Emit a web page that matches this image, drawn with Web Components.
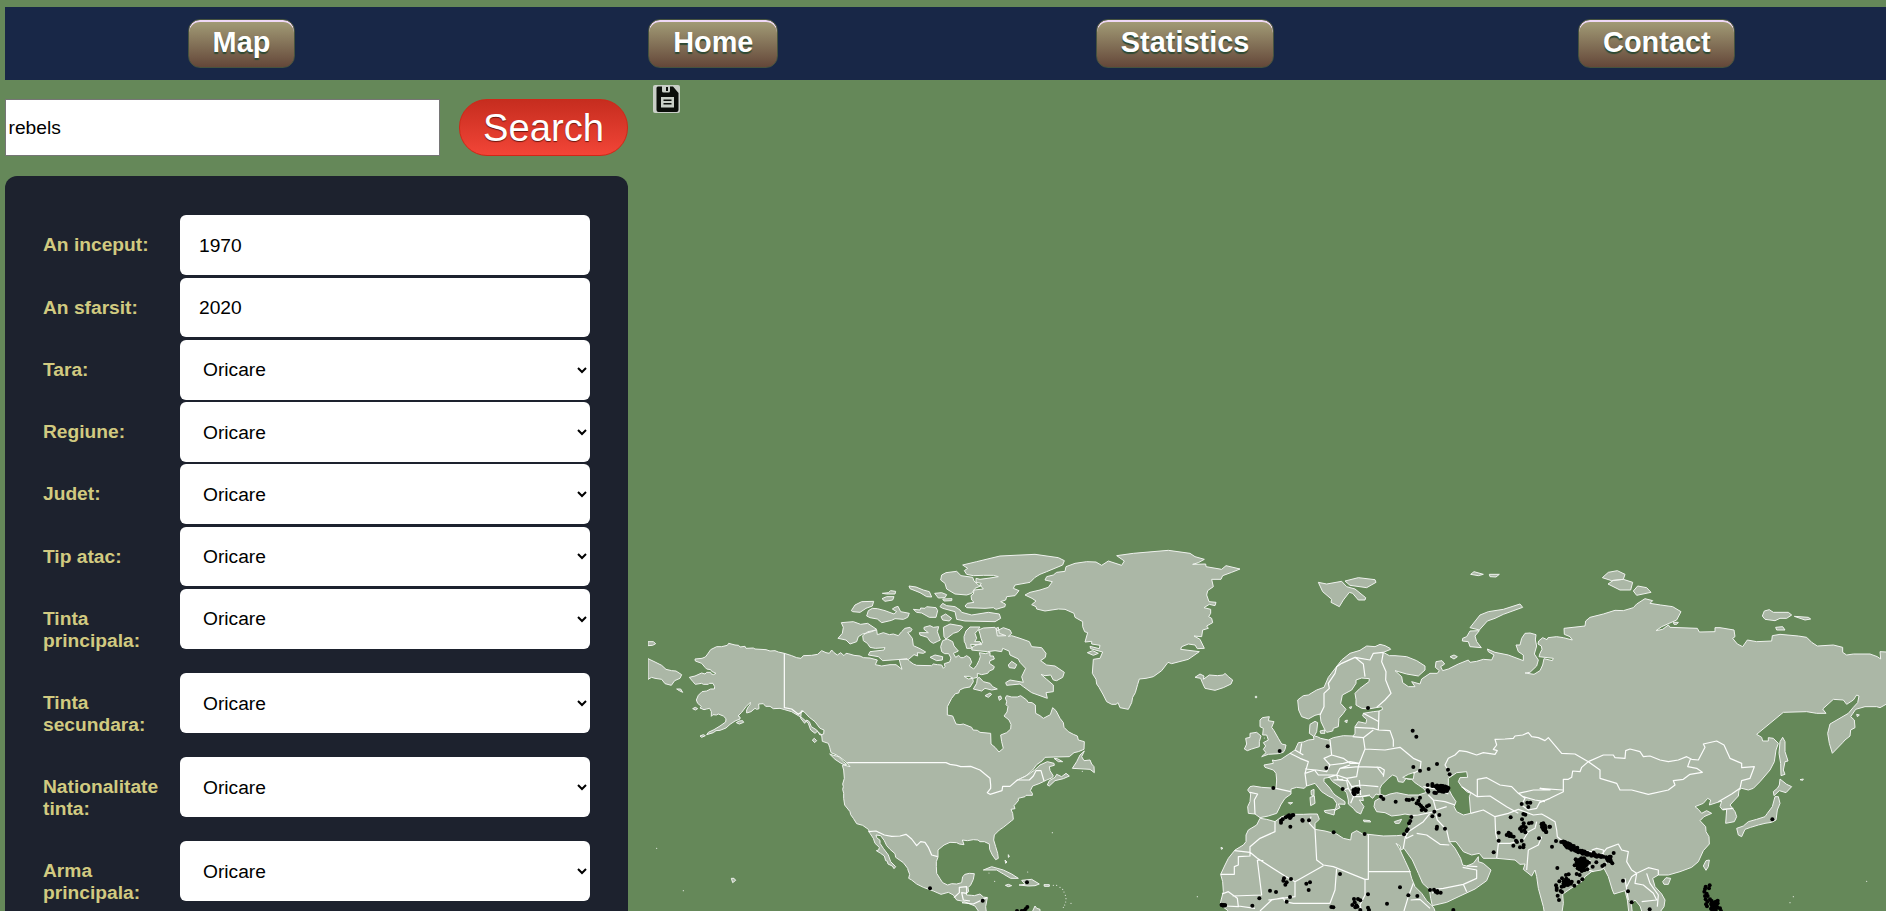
<!DOCTYPE html>
<html lang="ro">
<head>
<meta charset="utf-8">
<title>Map</title>
<style>
html,body{margin:0;height:100%;overflow:hidden;background:#658859;font-family:"Liberation Sans",Arial,sans-serif}
</style>
</head>
<body>
<map-page>
  <site-nav slot="nav"><nav-button>Map</nav-button><nav-button>Home</nav-button><nav-button>Statistics</nav-button><nav-button>Contact</nav-button></site-nav>
  <search-bar slot="side"></search-bar>
  <filter-panel slot="side">
    <filter-field kind="text" value="1970">An inceput:</filter-field>
    <filter-field kind="text" value="2020">An sfarsit:</filter-field>
    <filter-field>Tara:</filter-field>
    <filter-field>Regiune:</filter-field>
    <filter-field>Judet:</filter-field>
    <filter-field>Tip atac:</filter-field>
    <filter-field tall>Tinta principala:</filter-field>
    <filter-field tall>Tinta secundara:</filter-field>
    <filter-field tall>Nationalitate tinta:</filter-field>
    <filter-field tall>Arma principala:</filter-field>
  </filter-panel>
  <world-map slot="map"></world-map>
</map-page>
<script>
function define(name, html, setup){
  customElements.define(name, class extends HTMLElement{
    constructor(){ super(); this.attachShadow({mode:'open'}).innerHTML = html; }
    connectedCallback(){ if(setup) setup(this, this.shadowRoot); }
  });
}

define('map-page', `<style>
:host{display:grid;grid-template-columns:623px 1238px;grid-template-rows:73px 831px;column-gap:20px;padding:7px 0 0 5px;width:1881px;height:904px;overflow:hidden}
.nav{grid-column:1/3}
.side{padding-top:19px;display:flex;flex-direction:column;gap:19.5px}
</style><div class="nav"><slot name="nav"></slot></div><div class="side"><slot name="side"></slot></div><slot name="map"></slot>`);

define('site-nav', `<style>
:host{display:grid;grid-template-columns:repeat(4,471.8px);justify-items:center;align-items:center;height:73px;padding-left:.6px;background:#182747;overflow:hidden}
</style><slot></slot>`);

define('nav-button', `<style>
:host{display:block}
button{display:block;box-sizing:border-box;height:49px;padding:0 23.7px 3px;border:1px solid #45523f;border-radius:12px;background:linear-gradient(#a49e78,#644739);box-shadow:inset 0 2px 0 #efd8f6;color:#fff;font:bold 28.9px/44px "Liberation Sans",Arial,sans-serif;text-shadow:0 2px 1px #2f4a33}
</style><button><slot></slot></button>`);

define('search-bar', `<style>
:host{display:flex;justify-content:space-between;height:57.5px;align-items:flex-start}
input{box-sizing:border-box;width:435px;height:56.5px;border:1px solid #767676;padding:2px 2.5px 0;margin:0;font:19.2px "Liberation Sans",Arial,sans-serif;color:#000;background:#fff;outline:0}
button{box-sizing:border-box;width:169px;height:57px;padding:0;border:1px solid #d02718;border-radius:28px;background:linear-gradient(#c62d1f,#f24537);color:#fff;font:38.2px/54px "Liberation Sans",Arial,sans-serif;text-shadow:0 1px 1px #6b160e}
</style><input type="text" value="rebels"><button>Search</button>`);

define('filter-panel', `<style>
:host{display:block;flex:1;box-sizing:border-box;background:#1d222e;border-radius:12px 12px 0 0;padding:39.8px 38px 0}
</style><slot></slot>`);

define('filter-field', `<style>
:host{display:grid;grid-template-columns:137px 410px;height:62.3px}
:host([tall]){height:84.1px}
label{padding-top:19px;width:118px;color:#d1ca80;font:bold 19.2px/22px "Liberation Sans",Arial,sans-serif}
input,select{box-sizing:border-box;width:410px;height:59.7px;margin:0;border:0;border-radius:6px;background:#fff;color:#000;font:19.2px "Liberation Sans",Arial,sans-serif;padding:0 19px;outline:0}
input{padding-top:1px}
</style><label><slot></slot></label>`, (el, root)=>{
  const c = document.createElement(el.getAttribute('kind')==='text' ? 'input' : 'select');
  if(c.tagName==='INPUT') c.value = el.getAttribute('value');
  else c.add(new Option('Oricare'));
  root.append(c);
});

/* Polygons and lines use a grid of 3 units per pixel; "@n" sets the x origin for the points after it. */
const LAND = [
`@0 433,340 415,336 405,332 390,333 378,329 345,327 340,324 318,325 315,319 300,321 296,316 285,315 266,310 262,316 245,320 230,320 212,329 203,342 196,351 186,355 165,357 166,363 185,370 195,382 200,387 212,389 215,394 228,400 220,404 213,401 212,397 200,397 195,402 185,399 165,408 148,412 158,424 166,433 185,430 190,433 205,433 208,430 219,430 224,440 223,447 212,447 200,453 186,455 175,466 169,480 173,490 184,499 180,504 192,509 200,507 209,505 214,515 214,529 219,524 229,525 235,522 250,528 258,536 257,546 240,558 222,569 205,577 200,584 220,578 228,572 240,571 258,564 270,553 285,543 300,537 300,531 294,528 305,517 318,500 331,487 330,495 325,500 320,510 320,519 333,515 345,505 350,508 357,506 356,492 370,491 377,499 390,499 400,506 420,505 434,509 455,515 475,527 488,535 505,550 512,570 525,580 532,574 545,585 547,604 565,610 569,622 573,638 590,645 610,665 620,673 607,676 611,690 613,715 608,732 610,740 608,748 611,760 611,775 614,795 630,815 632,824 640,835 650,851 668,856 685,868 690,880 700,895 705,910 718,922 716,930 709,932 722,940 733,948 737,962 742,964 744,972 757,978 762,986 767,980 752,965 745,945 730,925 720,910 720,901 710,893 708,885 722,887 733,902 740,917 750,928 765,941 767,952 790,968 803,985 804,990 809,1003 806,1015 815,1020 830,1032 850,1042 880,1053 903,1063 925,1057 940,1065 950,1080 970,1084 990,1092 @900 105,1098 115,1113 115,1125 140,1125 137,1100 142,1073 130,1071 120,1062 103,1067 95,1066 80,1065 78,1060 86,1055 84,1043 92,1035 100,1018 103,1001 88,1000 75,1003 68,1010 65,1028 50,1032 35,1031 23,1035 8,1028 0,1016 -10,1000 -11,980 -11,965 -6,951 -6,930 12,915 30,907 50,908 58,912 72,914 67,900 82,902 100,899 114,900 120,905 133,905 148,912 149,928 157,945 167,959 175,955 173,940 167,920 161,900 163,885 178,870 190,862 215,842 220,838 218,820 213,808 225,806 222,797 235,782 235,775 255,770 258,766 277,766 277,760 271,752 278,738 297,731 310,725 320,720 335,714 340,708 330,692 328,680 343,676 342,670 322,665 300,675 284,690 265,704 232,720 256,709 278,690 290,674 307,662 315,652 345,651 388,650 402,638 415,635 432,628 433,605 415,600 412,588 400,583 385,575 372,562 370,548 360,535 348,512 338,503 331,524 310,535 300,527 287,520 286,495 276,488 264,487 260,480 242,467 232,471 215,471 200,467 196,474 200,484 198,494 204,500 201,516 192,528 207,540 213,553 212,567 200,578 182,585 185,605 190,625 177,636 165,622 153,612 152,580 120,577 112,571 99,570 95,562 70,552 60,554 48,552 38,528 22,525 22,500 35,475 46,461 56,459 59,450 72,444 90,441 100,425 98,415 85,417 72,409 88,409 100,415 112,412 112,400 125,404 143,400 148,393 160,388 163,380 148,370 150,362 163,357 160,348 150,348 150,337 136,341 118,338 121,350 117,362 110,376 101,387 88,378 95,367 90,354 80,347 70,353 62,353 56,346 47,352 40,340 55,333 42,318 38,305 22,297 8,302 2,320 5,335 14,341 26,341 33,354 29,366 13,371 15,380 10,385 5,375 -8,374 -20,372 -25,377 -70,376 -80,372 -90,365 -99,356 -122,359 -118,375 -114,388 -132,374 -150,374 -175,378 -194,374 -188,360 -210,354 -230,353 -240,348 -258,346 -275,341 @0 618,340 612,347 602,338 592,345 582,338 575,330 568,340 558,338 545,332 533,343 515,346 490,347 483,355 470,353 455,347`,
`@0 24,356 45,366 65,376 78,388 95,392 108,393 125,404 120,415 104,422 94,436 75,431 65,418 45,415 35,412 24,418`,
`@0 24,305 40,305 47,311 38,316 24,317`,
`@0 110,447 122,447 128,457 118,452`,`@0 158,506 166,502 173,506 166,510`,`@0 289,548 297,543 308,542 311,547 298,552`,`@0 180,588 190,584 196,587 185,592`,`@0 274,1015 282,1015 287,1021 278,1028`,
`@0 517,600 523,595 530,602 524,608`,`@0 569,642 580,646 598,650 617,665 630,680 615,676 600,668 585,658`,`@0 484,512 493,516 508,532 525,545 540,565 552,570 551,582 540,585 530,570 514,560 508,545 500,540 494,550 482,535`,
`@0 604,248 640,245 662,253 683,250 710,268 695,275 668,282 655,290 650,305 630,312 618,300 594,295 607,280 610,262`,
`@0 634,212 645,195 665,185 701,184 697,198 678,205 660,217 638,215`,
`@0 680,228 685,212 697,205 712,206 735,212 762,222 770,215 757,207 765,202 774,199 782,215 808,220 803,232 790,238 765,236 755,241 725,248 712,237 690,233`,
`@0 727,160 745,158 752,152 767,154 765,162 740,162`,`@0 726,176 740,170 762,170 758,180 735,184`,
`@0 807,138 828,141 850,150 868,155 875,171 860,170 840,158 810,146`,
`@0 668,287 684,275 710,270 712,284 730,278 748,284 760,282 775,287 785,275 795,265 810,262 816,268 812,275 803,277 817,295 820,317 840,326 857,336 850,340 832,338 833,348 822,344 806,358 782,358 728,362 715,350 685,345 690,335 732,330 735,323 706,325 690,322 682,310 670,302`,
`@0 852,262 870,257 880,262 896,260 892,275 901,300 893,304 880,310 870,304 862,292 840,285 838,278 865,278 852,268`,
`@0 820,208 840,210 842,204 855,205 860,200 888,203 893,212 888,232 868,232 845,219 830,217`,
`@0 884,160 905,158 920,164 915,173 895,174`,`@0 903,230 917,222 935,235 928,243 908,240`,`@0 908,177 936,176 935,182 912,183`,`@0 870,352 885,345 908,350 907,360 890,362`,
`@900 10,262 30,252 65,258 68,262 55,275 40,280 18,297 12,290`,
`@900 80,203 75,198 82,190 102,187 95,180 93,167 100,162 102,150 130,147 120,135 124,130 108,127 108,115 120,118 150,114 175,110 160,106 130,106 100,107 80,103 73,92 83,85 68,75 110,65 180,48 285,43 355,53 373,62 368,75 320,95 300,103 285,112 270,127 225,135 220,145 237,152 225,167 200,170 197,180 182,185 196,192 195,200 168,208 160,203 135,205`,
`@900 5,105 18,98 50,94 63,107 98,112 102,123 115,135 124,137 105,145 95,160 80,165 45,162 20,147 15,130 2,120`,
`@900 0,200 8,190 20,197 45,200 60,210 65,217 95,225 145,217 178,222 182,235 165,245 75,243 50,238 45,215 8,205`,
`@900 72,290 78,273 90,261 120,261 113,271 105,280 110,295 104,305 120,305 125,314 92,313 95,325 80,325 77,312 73,305`,
`@900 116,270 130,264 165,262 172,272 190,263 210,270 215,280 205,289 215,287 240,295 268,305 275,320 305,323 318,340 316,352 302,362 320,375 345,378 373,397 368,412 350,422 340,420 332,405 315,407 303,403 320,418 340,435 340,455 318,458 322,475 275,458 250,440 240,432 200,436 197,428 210,420 250,427 245,410 257,385 240,367 235,357 210,345 207,333 188,325 185,335 165,332 142,335 95,330 98,320 128,308 123,295 120,282`,
`@900 168,265 175,262 178,280 198,287 172,288`,`@900 205,375 215,364 230,374 225,385 208,383`,`@900 118,412 130,425 150,430 158,440 172,447 155,450 135,445 125,453 100,447 110,430 112,415`,`@900 135,467 150,459 155,463 145,472`,`@900 175,470 182,468 185,476 178,481`,
`@900 530,47 580,40 685,31 750,40 765,50 793,58 775,68 758,73 797,72 798,80 845,88 858,77 900,87 875,97 848,107 843,118 815,118 820,140 803,152 800,165 807,185 828,187 825,197 808,193 792,203 812,208 812,220 806,230 815,235 818,248 800,258 805,265 788,270 785,290 762,288 780,298 793,325 772,326 765,315 745,312 725,320 722,328 778,335 745,358 695,371 684,367 665,392 640,410 618,415 598,417 593,433 586,458 578,472 575,488 565,508 540,503 534,488 528,493 515,493 500,485 490,465 477,442 470,432 468,418 457,400 460,358 480,355 488,336 452,326 450,319 478,326 480,316 455,312 455,304 435,306 443,278 434,275 428,260 428,245 405,232 402,220 375,208 355,207 315,213 290,207 288,200 275,194 288,183 276,175 255,165 270,157 300,150 325,142 337,125 315,120 320,110 340,105 350,97 375,94 378,80 405,70 440,65 468,66 485,76 505,63 545,76 553,63`,
`@900 442,338 458,332 475,340 460,346`,
`@900 765,412 780,402 792,408 790,418 808,405 832,407 850,405 855,400 865,410 878,420 873,432 850,443 825,451 795,445 788,430 782,415`,
`@900 433,633 425,650 432,662 450,660 455,672 462,680 463,698 450,688 397,685 410,665 420,645`,`@900 322,735 328,722 345,712 350,703 365,710 378,700 388,708 370,716 345,722 328,738`,`@900 342,655 352,656 368,665 355,665`,
`@900 130,990 155,980 190,990 215,1002 235,1015 212,1015 190,1002 170,990`,`@900 237,1035 255,1033 245,1021 275,1018 298,1032 285,1037 265,1038`,`@900 196,1036 205,1033 215,1037 205,1040`,`@900 312,1034 328,1034 328,1039 313,1039`,`@900 205,944 208,950 205,952`,`@900 195,960 201,966 197,970`,`@900 278,1113 285,1098 290,1105 300,1108 300,1120 278,1120`,
`@900 946,469 950,469 950,473 946,473`,`@900 843,922 849,925 844,928`,
/* Eurasia and Africa */
`@1680 570,325 555,317 540,313 525,320 500,318 480,331 450,340 425,360 408,382 385,412 372,442 350,450 325,465 310,467 293,480 296,510 305,530 325,537 345,526 360,522 363,545 375,570 380,577 398,573 400,565 415,560 417,535 430,520 438,508 422,490 427,465 455,450 468,430 468,420 485,414 508,416 507,425 480,445 465,460 468,478 468,495 485,505 505,507 545,500 548,508 537,513 520,515 490,520 488,528 500,538 498,550 475,545 465,560 465,580 460,588 430,587 400,593 385,600 362,595 352,590 343,588 350,575 353,548 345,544 330,553 328,580 340,588 342,598 325,600 310,606 295,608 285,630 270,640 255,650 243,658 225,662 217,660 220,670 192,675 195,682 220,690 228,700 230,720 228,745 185,742 160,738 150,740 143,750 152,762 150,785 143,800 145,820 165,822 180,833 205,828 230,820 240,800 242,795 255,775 273,762 273,747 290,742 312,745 320,738 345,730 365,755 385,768 400,775 410,790 408,802 403,812 420,803 415,792 435,793 435,785 405,765 398,757 390,745 372,725 372,715 388,712 398,725 420,740 440,758 445,780 445,792 460,805 468,815 482,822 488,808 492,800 478,780 490,782 488,770 508,767 518,775 528,762 540,765 547,770 525,783 522,800 530,815 555,818 575,828 600,825 615,822 632,825 630,850 622,870 612,885 590,887 550,888 505,883 488,882 470,872 455,880 452,900 430,895 410,882 375,873 345,868 345,850 358,838 352,822 330,822 310,823 270,823 245,830 225,845 200,838 180,835 170,855 145,870 138,885 138,905 130,915 105,930 85,955 75,975 62,1003 68,1025 70,1055 62,1085 62,1095 85,1113 95,1130 710,1130 702,1105 695,1096 680,1082 665,1060 645,1040 635,1015 628,990 615,962 598,925 588,910 600,918 603,930 612,925 637,960 655,1000 668,1030 688,1048 692,1075 697,1097 740,1087 780,1068 825,1047 860,1022 873,990 850,970 835,965 835,950 820,970 800,978 788,975 782,955 765,925 748,905 768,905 790,935 815,945 838,940 850,955 890,955 945,960 960,973 975,972 970,988 995,1008 1005,990 1010,1010 1015,1045 1030,1100 1035,1130 @2700 64,1130 70,1090 68,1063 90,1047 125,1025 135,1010 155,995 183,990 192,985 205,1010 217,1050 222,1062 255,1052 262,1080 268,1130 278,1130 274,1090 285,1080 300,1098 305,1113 315,1130 350,1130 372,1100 375,1080 365,1062 345,1040 338,1015 355,1005 385,1005 420,995 455,982 475,965 490,932 508,912 507,890 498,875 497,860 480,842 492,830 515,820 500,812 485,820 475,808 465,800 490,790 503,775 512,780 508,795 545,783 540,800 548,810 560,808 557,850 583,845 590,830 585,815 570,795 595,768 597,750 605,745 625,750 640,745 660,725 690,690 703,665 708,630 715,610 700,595 685,593 685,603 668,603 665,592 650,583 690,550 730,517 800,515 830,520 858,520 848,507 880,478 910,480 920,493 940,480 950,465 957,468 953,488 940,502 925,520 870,552 863,580 868,610 877,640 908,608 915,600 930,588 932,570 945,563 943,540 932,530 947,508 975,500 1010,500 1020,503 1038,493 1060,490 1060,337 1020,335 1022,357 1012,350 990,342 940,342 920,345 908,337 908,322 880,315 832,318 815,307 800,292 775,288 720,283 697,287 695,303 650,305 622,300 608,320 592,312 578,295 585,290 582,270 540,263 525,263 525,275 478,276 472,265 390,262 385,255 368,268 348,272 365,260 410,240 423,215 398,200 362,195 330,190 338,182 315,176 290,192 280,203 250,212 225,211 190,222 150,232 137,243 135,258 72,265 73,283 90,290 97,300 70,293 50,290 24,293 21,299 8,293 -4,303 -6,312 4,318 6,328 0,340 -3,350 40,355 37,362 12,356 8,375 0,392 -18,403 -45,399 -30,397 -10,378 -5,360 -17,342 -10,318 -14,300 -12,284 @1680 990,279 975,280 965,295 960,315 948,315 955,335 970,345 970,362 925,345 885,337 862,327 865,335 882,345 875,360 850,358 830,364 810,367 805,360 775,372 745,387 728,392 722,380 734,372 726,362 708,365 706,382 718,392 712,400 690,400 665,417 660,432 635,425 645,440 625,440 608,428 605,410 585,392 620,402 655,408 675,390 675,378 650,362 620,350 585,347 568,347 550,337 572,328`,
`@1680 187,533 208,530 205,542 222,545 215,562 222,572 235,595 245,612 258,615 255,628 250,637 235,641 205,643 185,650 198,638 190,628 197,618 190,608 205,600 200,585 188,585 190,565 180,560 180,540`,
`@1680 133,627 140,612 137,595 150,592 150,580 170,577 183,588 178,605 178,620 155,627 142,632`,
`@1680 355,127 380,132 425,124 440,140 465,147 497,173 495,180 475,180 458,160 448,157 430,180 418,200 393,187 395,178 368,155`,`@1680 435,123 475,113 525,119 528,127 500,143 450,136`,
`@1680 360,573 373,570 375,580 362,580`,`@1680 434,543 442,540 440,549`,`@1680 448,502 455,500 452,507`,`@1680 373,812 405,808 402,825 375,817`,`@1680 330,772 343,768 345,790 332,797`,`@1680 333,752 342,748 342,767 334,765`,`@1680 490,840 510,842 512,846 492,845`,`@1680 583,845 605,838 598,850 586,850`,`@1680 265,788 278,788 270,793`,
`@1680 812,103 822,95 850,103 835,107`,`@1680 868,103 898,103 888,111 870,110`,
`@1680 810,263 840,225 865,215 910,208 960,192 968,202 910,223 885,235 862,243 838,270`,`@1680 810,273 838,272 825,288 830,305 844,323 810,320 805,305 787,303 788,295 800,290`,`@1680 750,350 762,345 772,350 762,357`,
`@2700 187,113 205,97 232,92 255,103 250,118 215,122`,`@2700 204,132 220,121 250,118 278,127 272,150 240,150`,`@2700 280,153 293,138 320,143 333,157 290,166`,`@2700 400,247 415,247 410,253 402,253`,
`@2700 667,228 673,213 688,209 700,217 745,217 755,225 740,235 720,235 705,242 675,238`,`@2700 763,229 805,232 812,237 795,240`,`@2700 707,262 728,260 735,270 710,270`,
`@2700 728,592 735,605 735,635 744,663 735,665 730,690 735,703 723,707 722,670 717,640 720,605`,`@2700 720,717 740,733 755,740 738,758 718,752 702,767 700,755 712,745 718,735`,`@2700 705,770 715,770 720,790 712,810 708,840 695,847 675,850 655,855 632,862 615,868 605,890 595,885 590,865 610,858 625,845 650,838 675,830 682,820 697,800`,`@2700 780,719 790,717 788,721`,`@2700 368,1025 378,1013 392,1015 385,1033 372,1033`,`@2700 490,978 498,962 508,960 505,980 498,991`,`@2700 950,523 958,525 952,530`
];
const SEA = [
`@1680 540,745 545,735 565,715 578,705 590,710 595,725 610,727 618,715 635,718 645,728 655,735 670,745 680,757 655,765 625,765 590,758 570,762 555,768 540,762`,
`@1680 608,712 625,703 643,697 640,717 625,718`,
`@1680 745,715 770,698 800,695 803,712 780,713 775,725 785,740 800,755 812,760 808,770 812,820 790,825 770,815 762,800 768,785 755,765 745,745`
];
const LINES = [
`@0 433,340 433,503 455,507 475,523 490,512`,`@0 622,668 918,668 930,673 950,676 962,680 @900 70,680 92,679 120,690 150,715 152,735 152,745 142,758 150,763 186,752 188,739 210,739 232,720 268,720 280,708 288,692 303,692 312,723`,
`@0 685,875 708,873 733,885 755,889 780,888 798,883 815,897 830,917 842,905 855,907 865,922 875,945 893,950`,
`@900 42,1073 58,1058 58,1042 80,1040 80,1060 65,1058 70,1080 90,1083`,
`@900 66,1088 100,1092 142,1072`,
`@1680 550,337 545,365 558,395 557,420 573,460 555,480 530,502`,`@1680 550,337 520,340 510,360 465,352 425,370 410,380 405,400 385,430 388,445 372,460 372,500 360,525`,`@1680 465,352 490,372 495,410`,
`@1680 537,513 535,570`,`@1680 490,520 537,545`,`@1680 465,562 520,565 535,570 570,572 580,600 580,620`,`@1680 458,590 490,593 520,570`,`@1680 490,593 495,627 555,630 600,622 640,655 663,665 660,690 640,700`,`@1680 495,627 478,670 450,670 430,655 395,645 390,600`,`@1680 395,645 372,655 390,675 380,695 350,690 315,687`,`@1680 390,675 430,670 450,665 478,670 475,680 540,682 553,690 550,710`,`@1680 270,640 300,655 325,665 315,700 320,738`,`@1680 315,700 345,690`,`@1680 345,692 355,705 410,705 420,685 475,680`,`@1680 410,705 440,715 470,710 475,680`,`@1680 385,712 410,705 415,720 440,722 445,745 430,750`,`@1680 440,715 455,740 480,735 535,740`,`@1680 445,745 460,770 480,770 510,765`,`@1680 455,740 460,770 452,790`,`@1680 530,680 550,705`,`@1680 305,610 300,640`,`@1680 285,630 310,645`,`@1680 420,685 450,675`,`@1680 478,720 482,765`,`@1680 400,720 430,718`,`@1680 452,745 470,750 475,765`,
`@1680 228,745 272,755`,`@1680 150,757 173,762 163,780 165,822`,
`@1680 670,740 720,750 745,762`,`@1680 685,765 700,780 735,785 765,795`,`@1680 700,780 708,810 740,800`,`@1680 632,827 655,825 705,815 712,840 740,870 748,905`,`@1680 690,820 670,845 625,875 615,895 610,925`,`@1680 650,880 680,885 720,913 748,915`,`@1680 612,882 620,895 640,885`,
`@1680 225,845 225,875 180,895 150,920 150,937 104,932`,`@1680 150,937 172,955 255,1008`,`@1680 150,920 150,948 115,950 115,975 103,980 103,1003 62,1003`,`@1680 172,960 190,962 M@1680 172,960 185,1065 98,1068`,`@1680 345,868 328,850 333,830`,`@1680 345,868 350,960 370,975 400,980 495,1018 505,1018 505,883`,`@1680 505,995 632,995`,`@1680 370,977 285,1025 255,1008`,`@1680 285,1025 285,1070 205,1080`,`@1680 410,983 405,1050 390,1090 280,1090 255,1085 250,1073 215,1080 180,1113`,`@1680 495,1018 495,1065 480,1095 485,1113`,`@1680 640,1030 625,1070 612,1113`,`@1680 632,1080 660,1078 690,1105`,`@1680 66,1062 85,1055 112,1075 115,1100 75,1098`,`@1680 115,1098 165,1105`,
`@1680 697,1060 705,1048 730,1045 790,1033 800,1055`,`@1680 790,1033 830,1015 830,990 788,982`,`@1680 800,978 832,980`,
`@1680 755,708 735,675 745,655 765,645 778,632 800,635 830,645 850,638 885,643 892,632 880,628 890,615 885,598 915,597 940,595 945,588 968,585 985,578 995,590 1015,593 1035,602 @2700 25,593 65,640 105,642 145,665 190,645 220,645 225,653 255,655 257,632 270,627 300,635 310,650 330,648 360,660 385,665 415,660 440,650 455,658 475,660 495,622 490,612 530,603 552,615 570,655 605,670 605,683 643,680 630,715 605,722 600,745 575,762 535,785`,
`@2700 145,665 180,690 180,715 230,730 240,750 275,750 325,763 385,750 405,735 400,722 430,718 450,703 487,697 470,685 443,680 452,655`,
`@2700 145,665 125,682 120,695 98,693 95,712 85,718 70,718 70,755 30,775 0,787`,`@1680 785,740 832,770 832,718 860,713 900,735 935,740 955,760 1000,750 1050,750 @2700 0,745 68,750`,`@1680 832,770 870,768 920,800 955,820`,`@1680 812,820 850,810 885,830 887,880 895,910 890,955`,`@1680 885,830 925,820 955,808 1000,825 1025,822 @2700 20,830 45,845 50,870 52,890 70,905 110,930 155,935 180,950 200,925 235,912 245,930 265,935 260,965 275,990 290,1000 325,983 355,990 355,1005`,
`@1680 955,760 975,775 965,795 985,810 1010,805 1020,785`,`@1680 970,770 1005,780 1035,785`,`@1680 895,910 930,910 970,900 985,875 1005,865 1010,845`,`@1680 980,990 985,930 1015,915 1025,890`,
`@2700 155,930 170,925 190,930 190,945`,`@2700 150,960 145,990 160,995`,`@2700 190,985 200,965 215,955`,`@2700 290,1000 285,1030 310,1035 340,1060 350,1080 305,1085`,`@2700 260,1040 275,1010 290,1000`,`@2700 255,1015 262,1060 265,1080`,`@2700 320,1000 330,1030 355,1065 352,1100`,`@2700 548,808 580,805`
];
const DOTS = `@0 870,1045 @900 128,1082 261,1027 262,1101 257,1107 252,1112 245,1113 231,1113 845,1094 855,1096 850,1097
@1680 504,504 638,572 649,590 239,633 383,619 379,684 220,744 428,747 640,681 660,692 686,687 711,672 744,689 749,703
460,750 467,747 475,748 460,758 466,755 473,756 463,763 543,770 550,777 587,785 620,779 627,780 638,778 660,773
683,735 697,732 697,738 683,751 685,755 703,758 708,759
655,782 650,790 658,793 663,798 668,803 665,810 671,807 677,811 681,799 687,796 703,815 697,829 718,825 634,831 631,843 627,850 623,868 620,873 612,883 711,860 710,866 735,866
243,848 243,842 248,838 257,832 262,829 267,826 273,830 280,825 270,834 276,826 271,860 307,840 308,842 327,841 401,877 494,882
252,1015 250,1022 260,1027 256,1034 273,1017 210,1052 228,1056 178,1075 157,1097 270,1071 260,1085 319,1031 330,1027 326,1050 420,1002 394,1101 400,1102
462,1077 474,1077 481,1081 464,1087 457,1095 469,1096 472,1100 466,1102 481,1110 504,1063 504,1103 507,1110 561,1091 600,1042 625,1066 652,1068 690,1050 702,1049 707,1055 712,1053 722,1058 712,1058 70,1095 65,1095 75,1096 760,1110
965,792 982,788 991,788 985,801 932,832 970,822 976,824 966,838 971,850 995,848 987,850 960,866 964,862 970,858 977,862 965,873 973,870 976,877 896,878 896,902 881,937 920,885 926,878 932,882 928,888 935,889 941,890 948,902 951,906 965,902 971,915 960,922 970,922 940,917 1017,895
1025,852 1030,855 1026,861 1033,861 1036,866 1030,868 1038,876 1048,860
@2700 5,853 10,850 15,857 8,862 16,864 12,870 19,876 30,860 48,903 36,920 52,984
75,906 85,911 190,950 178,948 166,946 161,938 200,953 212,950 221,939 206,960 217,970 211,964 187,978 193,974 169,967 158,980
110,1002 119,1005 127,1018 116,1026 103,1037 86,1003 78,1005 66,1015 58,1024 48,1036 65,1040 50,1044 50,1050 62,1053 66,1056 53,1067 57,1080
249,1022 264,1054 275,1087 329,1108 697,838
107,958 104,976 113,985 125,993 134,990 142,988 147,968 132,955 124,955 118,962
497,1040 509,1036 507,1045 495,1047 493,1055 500,1061 495,1068 503,1068 497,1078 502,1085 498,1093 501,1099 510,1078 515,1083 520,1090 527,1085 533,1082 533,1090 525,1097 519,1101 513,1106 531,1100 540,1105 543,1113 527,1111 517,1111`;
/* Dense groups: x, y, half-width, half-height, slope, count */
const CLUSTERS = [[2405,742,20,6,.05,26],[2408,751,14,6,0,14],[2790,919,23,8,.45,40],[2829,937,27,5,.3,26],[2875,948,22,4,.1,10],[2825,972,17,16,0,34],[2781,1028,14,11,0,16],[2908,958,9,9,0,5],[3220,1095,12,10,.3,9]];
const SPECKS = `@0 50,925 130,1052 @900 337,878 147,999 164,1024 263,996 340,1036 350,1036 360,1042 368,1048 372,1056 376,1066 378,1076 377,1086 374,1095 370,1102 393,1090 772,1070 427,694 973,594 @2700 750,1088 760,1070 980,1024`;

function points(s){
  let o = 0; const out = [];
  for(const t of s.split(/\s+/)){
    if(t[0]==='@') o = +t.slice(1);
    else if(t.includes(',')){ const [x,y] = t.split(','); out.push([+x+o, +y]); }
  }
  return out;
}
const path = (s,z)=> s.split('M').map(p=>'M'+points(p).map(q=>q.join(' ')).join('L')+z).join('');
const dot = ([x,y],r=6)=>`<circle cx="${x}" cy="${y}" r="${r}"/>`;
let dots = points(DOTS).map(p=>dot(p)).join('');
for(const [x,y,w,h,k,n] of CLUSTERS) for(let i=0;i<n;i++){
  const r = Math.sqrt((i+.5)/n)*(1+.22*Math.sin(i*7.3)), a = i*2.39996, dx = w*r*Math.cos(a);
  dots += dot([(x+dx).toFixed(1), (y+dx*k+h*r*Math.sin(a)).toFixed(1)]);
}

define('world-map', `<style>
:host{display:block;position:relative;width:1238px;height:831px;overflow:hidden}
.world{display:block}
.save{position:absolute;left:5px;top:5px;width:27px;height:28px}
</style>
<svg class="world" width="1238" height="831" viewBox="24 -1380 3714 2493">
<g fill="#abb7a6" stroke="#eff2ee" stroke-width="3" stroke-linejoin="round"><path d="${LAND.map(s=>path(s,'Z')).join('')}"/></g>
<g fill="#658859" stroke="#eff2ee" stroke-width="3" stroke-linejoin="round"><path d="${SEA.map(s=>path(s,'Z')).join('')}"/></g>
<path fill="none" stroke="#fcfdfc" stroke-width="3.6" stroke-linejoin="round" d="${LINES.map(s=>path(s,'')).join('')}"/>
<g fill="#e4e9e2">${points(SPECKS).map(p=>dot(p,1.8)).join('')}</g>
<g>${dots}</g>
</svg>
<svg class="save" viewBox="0 0 27 28"><rect width="27" height="28" rx="2" fill="#c9cfc7"/><path fill="#0b0e0a" d="M5 1.5H9V6Q9 7.5 10.5 7.5H15.5Q17 7.5 17 6V1.5H20L25.5 8V25Q25.5 27 23.5 27H5.5Q3.5 27 3.5 25V3Q3.5 1.5 5 1.5Z"/><path fill="#0b0e0a" d="M13 2h2v4h-2z"/><rect x="8" y="12" width="13" height="10.5" fill="#c9cfc7"/><path stroke="#0b0e0a" stroke-width="1.4" d="M10.5 15.2H18.5M10.5 18.8H18.5"/></svg>`);
</script>
</body>
</html>
